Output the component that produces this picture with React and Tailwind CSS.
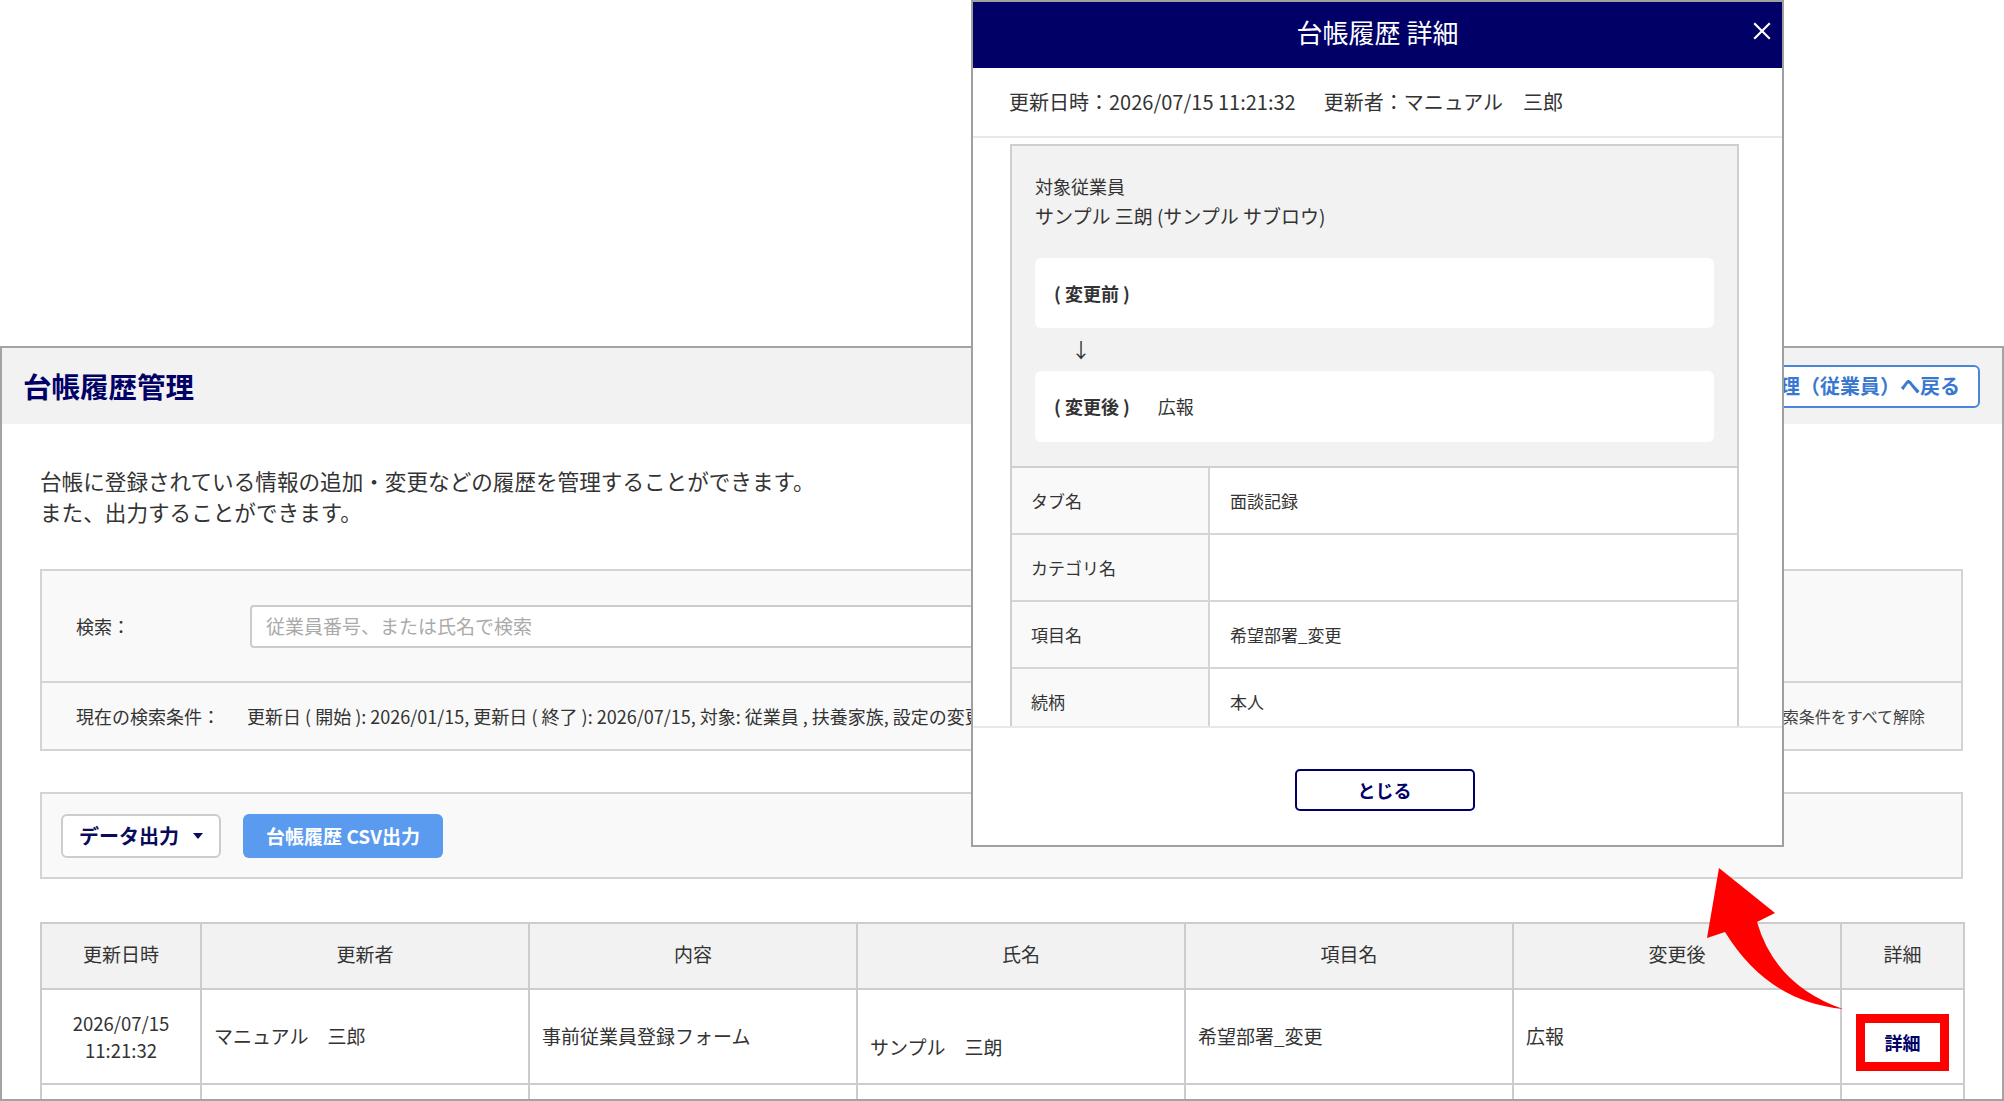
import React from "react";

function CloseIcon() {
  return (
    <svg width="18" height="18" viewBox="0 0 18 18" className="block">
      <path d="M2 2 L16 16 M16 2 L2 16" stroke="white" strokeWidth="2.2" strokeLinecap="square" fill="none" />
    </svg>
  );
}

function Caret() {
  return (
    <svg width="10" height="6" viewBox="0 0 10 6" className="block">
      <path d="M0 0 L10 0 L5 6 Z" fill="#0a0a5a" />
    </svg>
  );
}

function RedArrow() {
  return (
    <svg
      className="absolute left-[1700px] top-[860px] pointer-events-none"
      width="150"
      height="155"
      viewBox="1700 860 150 155"
    >
      <path
        d="M1719 868 L1775 913 L1757 922 Q1775 985 1843 1009 Q1768 1002 1725 932 L1707 938 Z"
        fill="#ff0000"
      />
    </svg>
  );
}

export default function App() {
  const cols = ["更新日時", "更新者", "内容", "氏名", "項目名", "変更後", "詳細"];
  return (
    <div className="relative w-[2004px] h-[1101px] overflow-hidden bg-white text-[#333] font-['Noto_Sans_CJK_JP','Noto_Sans',sans-serif]">
      <div className="h-[346px]" />
      {/* Page */}
      <div className="h-[755px] border-2 border-[#a3a3a3] overflow-hidden flex flex-col">
        <header className="h-[76px] shrink-0 bg-[#f2f2f2] flex items-center justify-between pl-[21px] pr-[22px]">
          <h1 className="text-[28.5px] font-bold text-[#000066] leading-none">台帳履歴管理</h1>
          <button className="h-[43px] px-[18px] rounded-[6px] border-2 border-[#4a86d8] bg-white text-[20px] font-bold text-[#3a78d0] leading-none">
            台帳管理（従業員）へ戻る
          </button>
        </header>

        <div className="pl-[38px] pr-[39px]">
          <p className="mt-[41px] text-[21.6px] leading-[31px] text-[#333]">
            台帳に登録されている情報の追加・変更などの履歴を管理することができます。
            <br />
            また、出力することができます。
          </p>

          {/* Search panel */}
          <div className="mt-[42px] border-2 border-[#d4d4d4] bg-[#f9f9f9]">
            <div className="h-[110px] flex items-center pl-[34px]">
              <span className="w-[174px] text-[18px]">検索：</span>
              <div className="h-[43px] w-[1250px] border-2 border-[#cccccc] rounded-[4px] bg-white flex items-center pl-[14px] text-[19px] text-[#aaaaaa]">
                従業員番号、または氏名で検索
              </div>
            </div>
            <div className="h-[68px] border-t-2 border-[#d4d4d4] flex items-center pl-[34px] pr-[36px]">
              <span className="w-[171px] shrink-0 text-[18px]">現在の検索条件：</span>
              <span className="flex-1 min-w-0 overflow-hidden whitespace-nowrap text-[18px]">
                更新日 ( 開始 ): 2026/01/15, 更新日 ( 終了 ): 2026/07/15, 対象: 従業員 , 扶養家族, 設定の変更: すべて
              </span>
              <span className="shrink-0 ml-[20px] text-[16px] text-[#444]">検索条件をすべて解除</span>
            </div>
          </div>

          {/* Data output panel */}
          <div className="mt-[41px] h-[87px] border-2 border-[#d4d4d4] bg-[#f9f9f9] flex items-center pl-[19px] gap-[22px]">
            <button className="w-[160px] h-[44px] border-2 border-[#cccccc] rounded-[6px] bg-white flex items-center justify-center gap-[14px] text-[20px] font-bold text-[#0a0a5a] leading-none">
              <span>データ出力</span>
              <Caret />
            </button>
            <button className="w-[200px] h-[44px] rounded-[6px] bg-[#5b9bef] text-white text-[19px] font-bold leading-none">
              台帳履歴 CSV出力
            </button>
          </div>

          {/* Table */}
          <table className="mt-[43px] w-[1923px] table-fixed border-collapse text-[19px]">
            <colgroup>
              <col className="w-[160px]" />
              <col className="w-[328px]" />
              <col className="w-[328px]" />
              <col className="w-[328px]" />
              <col className="w-[328px]" />
              <col className="w-[328px]" />
              <col className="w-[123px]" />
            </colgroup>
            <thead>
              <tr className="h-[66px] bg-[#f2f2f2]">
                {cols.map((c) => (
                  <th key={c} className="border-2 border-[#cccccc] font-normal text-center text-[#333] pb-[4px]">
                    {c}
                  </th>
                ))}
              </tr>
            </thead>
            <tbody>
              <tr className="h-[95px]">
                <td className="border-2 border-[#cccccc] text-center leading-[27px] text-[18.5px]">
                  2026/07/15
                  <br />
                  11:21:32
                </td>
                <td className="border-2 border-[#cccccc] px-[12px]">マニュアル　三郎</td>
                <td className="border-2 border-[#cccccc] px-[12px]">事前従業員登録フォーム</td>
                <td className="border-2 border-[#cccccc] px-[12px] pt-[22px]">サンプル　三朗</td>
                <td className="border-2 border-[#cccccc] px-[12px]">希望部署_変更</td>
                <td className="border-2 border-[#cccccc] px-[12px]">広報</td>
                <td className="border-2 border-[#cccccc] pt-[11px]">
                  <div className="mx-auto w-[93px] h-[57px] border-[9px] border-[#ff0000] bg-white flex items-center justify-center font-bold text-[#000066] text-[18px]">
                    詳細
                  </div>
                </td>
              </tr>
              <tr className="h-[40px]">
                {cols.map((c) => (
                  <td key={c} className="border-2 border-[#cccccc]" />
                ))}
              </tr>
            </tbody>
          </table>
        </div>
      </div>

      <RedArrow />

      {/* Modal */}
      <div className="absolute left-[971px] top-0 w-[813px] h-[847px] border-2 border-[#a0a0a0] bg-white flex flex-col">
        <div className="relative h-[66px] shrink-0 bg-[#000066] flex items-center justify-center pb-[6px]">
          <span className="text-white text-[26px] leading-none">台帳履歴 詳細</span>
          <div className="absolute right-[11px] top-[20px]">
            <CloseIcon />
          </div>
        </div>
        <div className="h-[70px] shrink-0 flex items-center pl-[36px] text-[20px] text-[#333] border-b-2 border-[#e8e8e8]">
          <span>更新日時：2026/07/15 11:21:32</span>
          <span className="ml-[28px]">更新者：マニュアル　三郎</span>
        </div>
        <div className="flex-1 min-h-0 overflow-hidden pt-[6px] pl-[37px] pr-[43px]">
          <div className="border-2 border-[#cfcfcf]">
            <div className="bg-[#f2f2f2] px-[23px] pt-[25px] pb-[24px] border-b-2 border-[#cfcfcf]">
              <div className="text-[18px] leading-[30px]">対象従業員</div>
              <div className="text-[19px] leading-[30px]">サンプル 三朗 (サンプル サブロウ)</div>
              <div className="mt-[27px] h-[70px] rounded-[6px] bg-white flex items-center pl-[19px] text-[18px] font-bold">
                ( 変更前 )
              </div>
              <div className="h-[43px] flex items-center pl-[36px] text-[20px]">↓</div>
              <div className="h-[71px] rounded-[6px] bg-white flex items-center pl-[19px] text-[18px]">
                <span className="font-bold">( 変更後 )</span>
                <span className="ml-[28px]">広報</span>
              </div>
            </div>
            {[
              ["タブ名", "面談記録"],
              ["カテゴリ名", ""],
              ["項目名", "希望部署_変更"],
              ["続柄", "本人"],
            ].map(([k, v]) => (
              <div key={k} className="h-[67px] flex border-b-2 border-[#d5d5d5] text-[17px]">
                <div className="w-[198px] shrink-0 bg-[#f9f9f9] border-r-2 border-[#d5d5d5] flex items-center pl-[19px]">
                  {k}
                </div>
                <div className="flex-1 flex items-center pl-[20px]">{v}</div>
              </div>
            ))}
          </div>
        </div>
        <div className="h-[119px] shrink-0 border-t-2 border-[#e8e8e8] flex items-center justify-center pt-[6px] pl-[14px]">
          <button className="w-[180px] h-[42px] border-2 border-[#000066] rounded-[5px] bg-white text-[18px] font-bold text-[#000066] leading-none">
            とじる
          </button>
        </div>
      </div>
    </div>
  );
}
